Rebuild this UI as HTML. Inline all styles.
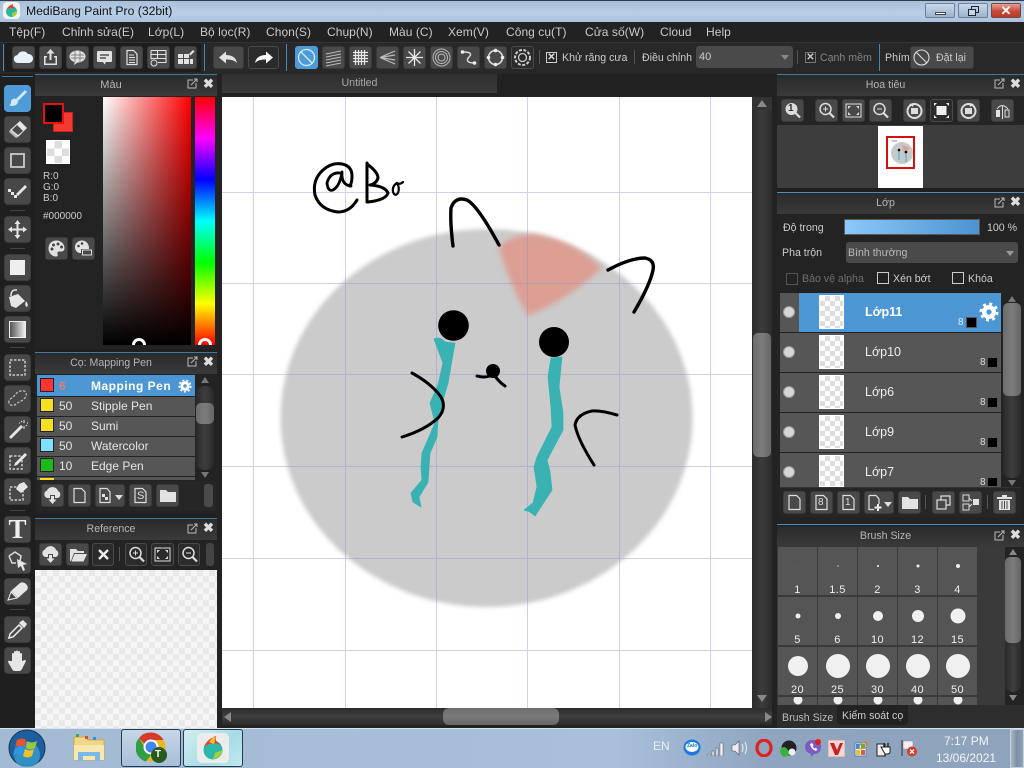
<!DOCTYPE html>
<html><head><meta charset="utf-8"><title>MediBang Paint Pro</title>
<style>
html,body{margin:0;padding:0;width:1024px;height:768px;overflow:hidden;background:#1f1f1f}
body{position:relative;font-family:"Liberation Sans","Noto Sans CJK JP",sans-serif;font-size:12px;color:#ccc}
div,span,svg{position:absolute;box-sizing:border-box}
span,.t{white-space:nowrap}
.m{top:25px;font-size:12px;letter-spacing:.05px;color:#c9c9c9}
.b{width:23px;height:23px;background:#494949;border-radius:3px;border:1px solid #3a3a3a}
.b svg{left:0;top:0;width:21px;height:21px;fill:#e2e2e2;stroke:none}
.d{background:#2b2b2b;border-color:#4a4a4a}
.l{width:27px;height:27px;background:#484848;border-radius:4px;border:1px solid #3b3b3b}
.l svg{left:0;top:0;width:25px;height:25px;fill:#e6e6e6}
.tb{height:21px;background:linear-gradient(#2a2a2a,#3a3a3a);text-align:center;line-height:21px;color:#b5b5b5;font-size:10.6px}
.ck{background:repeating-conic-gradient(#e9e9e9 0 25%,#f5f5f5 0 50%) 0 0/12px 12px}
.x{color:#ddd;font-size:13px;font-weight:bold;line-height:14px}
.sw{left:40px;width:14px;height:14px;border:1px solid #222}
.row{left:37px;width:158px;height:19px;background:#565656}
.n{left:59px;color:#e4e4e4}.na{left:91px;color:#e4e4e4}
.lr{left:780px;width:221px;height:39px;background:#565656}
.eye{left:784px;width:10px;height:10px;border-radius:50%;background:#d6d6d6;box-shadow:0 0 0 1px #999}
.th{left:819px;width:25px;height:34px;border:1px solid #fff;background:repeating-conic-gradient(#ddd 0 25%,#fff 0 50%) 0 0/10px 10px}
.ln{left:865px;color:#eee;font-size:12.5px}
.ls{width:11px;height:11px;background:#000;border:1px solid #555}
.e{color:#ddd;font-size:10px}
.c{width:39px;height:48px;background:#555}
.c i{position:absolute;border-radius:50%;background:#f0f0f0;left:50%;top:19px;transform:translate(-50%,-50%)}
.c b{position:absolute;left:0;right:0;top:37px;text-align:center;color:#eee;font-weight:normal;font-size:11px;letter-spacing:.4px}
.sb{background:linear-gradient(90deg,#2a2a2a,#3d3d3d,#2a2a2a);border-radius:8px}
.th2{background:linear-gradient(90deg,#6c6c6c,#7c7c7c,#666);border-radius:5px}
.ch{width:12px;height:12px;border:1px solid #ccc}
.s{font-size:10.6px;color:#ccc}
</style></head><body>

<!-- title bar -->
<div style="left:0;top:0;width:1024px;height:22px;background:linear-gradient(#a9c0da,#b6cee6 60%,#aac3dd);border-top:1px solid #333c48"></div>
<svg style="left:3px;top:2px;width:17px;height:17px" viewBox="0 0 17 17"><rect width="17" height="17" rx="4" fill="#f2f2f2"/><circle cx="8.500" cy="9.500" r="5.500" fill="#2bb5a0"/><path d="M4 7Q6 3 10 2Q9 5 13 7Q8 5 4 7Z" fill="#e8402c"/><path d="M9 15Q14 14 14 9L9 11Z" fill="#a3cf3c"/></svg>
<span style="left:26px;top:4px;font-size:12.200px;color:#111">MediBang Paint Pro (32bit)</span>
<div style="left:925px;top:3px;width:30px;height:15px;border:1px solid #6d829a;border-radius:2px;background:linear-gradient(#c8d8ea,#9db4cc)"><div style="left:9px;top:8px;width:11px;height:3px;background:#fff;border:1px solid #445"></div></div>
<div style="left:958px;top:3px;width:30px;height:15px;border:1px solid #6d829a;border-radius:2px;background:linear-gradient(#c8d8ea,#9db4cc)"><div style="left:12px;top:2px;width:8px;height:7px;border:1px solid #223"></div><div style="left:9px;top:5px;width:8px;height:7px;border:1px solid #223;background:#c4d4e6"></div></div>
<div style="left:991px;top:3px;width:30px;height:15px;border:1px solid #7c4640;border-radius:2px;background:linear-gradient(#e4a094,#c84a3a 55%,#b83a2c);color:#fff;text-align:center;font-weight:bold;font-size:13px;line-height:13px">✕</div>

<!-- menu -->
<div style="left:0;top:22px;width:1024px;height:20px;background:#222"></div>
<span class="m" style="left:9px">Tệp(F)</span>
<span class="m" style="left:62px">Chỉnh sửa(E)</span>
<span class="m" style="left:148px">Lớp(L)</span>
<span class="m" style="left:200px">Bộ lọc(R)</span>
<span class="m" style="left:266px">Chọn(S)</span>
<span class="m" style="left:327px">Chụp(N)</span>
<span class="m" style="left:389px">Màu (C)</span>
<span class="m" style="left:448px">Xem(V)</span>
<span class="m" style="left:506px">Công cụ(T)</span>
<span class="m" style="left:585px">Cửa số(W)</span>
<span class="m" style="left:660px">Cloud</span>
<span class="m" style="left:706px">Help</span>

<!-- toolbar -->
<div style="left:0;top:42px;width:1024px;height:32px;background:#282828;border-top:1px solid #333"></div>
<div style="left:3px;top:44px;width:1px;height:27px;background:#4b86ad"></div>
<div style="left:5px;top:43px;width:196px;height:29px;background:#1d1d1d"></div>
<div style="left:204px;top:44px;width:1px;height:27px;background:#4b86ad"></div>
<div style="left:286px;top:44px;width:1px;height:27px;background:#4b86ad"></div>
<div style="left:879px;top:44px;width:1px;height:27px;background:#4b86ad"></div>

<div class="b" style="left:12px;top:46px"><svg viewBox="0 0 21 21"><path d="M5 16a4 4 0 0 1-.5-8A6 6 0 0 1 15 7a4.500 4.500 0 0 1 1 9Z" fill="#e8f2fb"/></svg></div>
<div class="b" style="left:39px;top:46px"><svg viewBox="0 0 21 21"><path d="M10.500 2l4 4.500h-3V13h-2V6.500h-3ZM4 9h3v1.500H5.500v6h10v-6H14V9h3v9H4Z"/></svg></div>
<div class="b" style="left:66px;top:46px"><svg viewBox="0 0 21 21"><ellipse cx="10.500" cy="9.500" rx="8" ry="6"/><path d="M8 14l-1 4 5-3.500Z"/><path d="M4 8h13M4 11h13M8 4v11M13 4v11" stroke="#666" stroke-width=".7"/></svg></div>
<div class="b" style="left:93px;top:46px"><svg viewBox="0 0 21 21"><path d="M4 4h13a1 1 0 0 1 1 1v9a1 1 0 0 1-1 1h-5l-1.500 2.500L9 15H4a1 1 0 0 1-1-1V5a1 1 0 0 1 1-1Z"/><path d="M6 8h9M6 11h6" stroke="#555" stroke-width="1.500"/></svg></div>
<div class="b" style="left:120px;top:46px"><svg viewBox="0 0 21 21"><path d="M6 3.500h6.500L16 7v10.500H6Z" fill="none" stroke="#e2e2e2" stroke-width="1.200"/><path d="M8 8h5M8 10.500h6M8 13h6M8 15.500h6" stroke="#e2e2e2"/></svg></div>
<div class="b" style="left:147px;top:46px"><svg viewBox="0 0 21 21"><path d="M3 3.500h15v12H10M3 3.500v9M3 7.500h15M3 11.500h15M9.500 3.500v8" fill="none" stroke="#e2e2e2" stroke-width="1.100"/><circle cx="6" cy="16" r="3" fill="none" stroke="#e2e2e2"/></svg></div>
<div class="b" style="left:174px;top:46px"><svg viewBox="0 0 21 21"><path d="M3 7h5v4H3ZM9 7h5v4H9ZM3 12h5v5H3ZM9 12h5v5H9ZM15 12h3v5h-3Z"/><path d="M14 7l4-4 1.500 1.500-4 4Z"/></svg></div>

<div class="b" style="left:213px;top:46px;width:31px"><svg viewBox="0 0 29 21" style="width:29px"><path d="M5 10.500l7-6v3.500c6 0 10 2.500 11 8-3-3-6-3.500-11-3.500v4Z"/></svg></div>
<div class="b d" style="left:248px;top:46px;width:31px"><svg viewBox="0 0 29 21" style="width:29px"><path d="M24 10.500l-7-6v3.500c-6 0-10 2.500-11 8 3-3 6-3.500 11-3.500v4Z" fill="#fff"/></svg></div>

<div class="b" style="left:295px;top:46px;background:#4c9ad6;border-color:#4c9ad6"><svg viewBox="0 0 21 21"><circle cx="10.500" cy="10.500" r="8" fill="none" stroke="#d8ecfa" stroke-width="1.300"/><path d="M5 5l11 11" stroke="#d8ecfa" stroke-width="1.300"/></svg></div>
<div class="b" style="left:322px;top:46px"><svg viewBox="0 0 21 21"><path d="M3 7l15-3M3 10l15-3M3 13l15-3M3 16l15-3M3 19l15-3" stroke="#bbb" stroke-width="1.100"/></svg></div>
<div class="b" style="left:349px;top:46px"><svg viewBox="0 0 21 21"><path d="M3 5.500h15M3 8.500h15M3 11.500h15M3 14.500h15M5.500 3v15M8.500 3v15M11.500 3v15M14.500 3v15" stroke="#e8e8e8" stroke-width="1.200"/></svg></div>
<div class="b" style="left:376px;top:46px"><svg viewBox="0 0 21 21"><path d="M3 10.500L18 4M3 10.500L18 8M3 10.500L18 13M3 10.500L18 17" stroke="#bbb" stroke-width="1.200"/></svg></div>
<div class="b" style="left:403px;top:46px"><svg viewBox="0 0 21 21"><path d="M10.500 2v17M2 10.500h17M4.500 4.500l12 12M16.500 4.500l-12 12" stroke="#e8e8e8" stroke-width="1.300"/></svg></div>
<div class="b" style="left:430px;top:46px"><svg viewBox="0 0 21 21" style="fill:none"><circle cx="10.500" cy="10.500" r="8.500" stroke="#bbb"/><circle cx="10.500" cy="10.500" r="6" stroke="#bbb"/><circle cx="10.500" cy="10.500" r="3.500" stroke="#bbb"/></svg></div>
<div class="b" style="left:457px;top:46px"><svg viewBox="0 0 21 21" style="fill:none"><path d="M5 5c8 0 9 2 6 5s-2 6 5 6" stroke="#ddd" stroke-width="1.400"/><circle cx="4.500" cy="5" r="1.800" fill="#eee"/><circle cx="16.500" cy="16" r="1.800" fill="#eee"/></svg></div>
<div class="b" style="left:484px;top:46px"><svg viewBox="0 0 21 21" style="fill:none"><circle cx="10.500" cy="10.500" r="7" stroke="#ddd" stroke-width="1.600"/><circle cx="10.500" cy="3.500" r="1.800" fill="#eee"/><circle cx="10.500" cy="17.500" r="1.800" fill="#eee"/><circle cx="3.500" cy="10.500" r="1.800" fill="#eee"/><circle cx="17.500" cy="10.500" r="1.800" fill="#eee"/></svg></div>
<div class="b d" style="left:511px;top:46px"><svg viewBox="0 0 21 21" style="fill:none"><circle cx="10.500" cy="10.500" r="7.500" stroke="#ccc" stroke-width="2" stroke-dasharray="3 1.500"/><circle cx="10.500" cy="10.500" r="4" stroke="#ccc" stroke-width="1.300"/></svg></div>

<div style="left:539px;top:50px;width:1px;height:14px;background:#555"></div>
<div style="left:546px;top:52px;width:11px;height:11px;border:1px solid #ccc;color:#ddd;font-size:10px;line-height:9px;text-align:center;font-weight:bold">✕</div>
<span class="s" style="left:562px;top:52px">Khử răng cưa</span>
<div style="left:634px;top:50px;width:1px;height:14px;background:#555"></div>
<span class="s" style="left:642px;top:52px">Điều chỉnh</span>
<div style="left:696px;top:46px;width:97px;height:22px;background:#4a4a4a;border-radius:3px"></div>
<span style="left:699px;top:51px;color:#ccc;font-size:11px">40</span>
<div style="left:781px;top:55px;border-left:4px solid transparent;border-right:4px solid transparent;border-top:5px solid #888"></div>
<div style="left:797px;top:50px;width:1px;height:14px;background:#555"></div>
<div style="left:805px;top:52px;width:11px;height:11px;border:1px solid #777;color:#ccc;font-size:10px;line-height:9px;text-align:center;font-weight:bold">✕</div>
<span class="s" style="left:820px;top:52px;color:#848484">Cạnh mềm</span>
<span class="s" style="left:885px;top:52px">Phím</span>
<div class="b" style="left:910px;top:46px;width:64px"><svg viewBox="0 0 21 21"><circle cx="10.500" cy="10.500" r="7.500" fill="none" stroke="#ddd" stroke-width="1.100"/><path d="M5.500 5.500l10 10" stroke="#ddd" stroke-width="1.100"/></svg><span class="s" style="left:25px;top:5px">Đặt lại</span></div>

<!-- left tool strip -->
<div style="left:0;top:74px;width:35px;height:654px;background:#1f1f1f"></div>
<div style="left:2px;top:76px;width:31px;height:1px;background:#3f7aa3"></div>
<div class="l" style="left:4px;top:85px;background:#4f9bd6;border-color:#4f9bd6"><svg viewBox="0 0 25 25"><path d="M21 4l-9 9 2 2 9-9Z" fill="#d4e8f8" transform="translate(-1 0)"/><path d="M11 13c-2-1-5 0-5 3 0 2-1 3-2 3 3 2 9 1 9-4Z" fill="#d4e8f8"/></svg></div>
<div class="l" style="left:4px;top:116px"><svg viewBox="0 0 25 25"><path d="M15 4l7 7-9 9-8-7Z"/><path d="M12 8l6 6-5 4-6-5Z" fill="#4a4a4a"/><path d="M5 13l8 7-2 1-7-6Z" fill="#bbb"/></svg></div>
<div class="l" style="left:4px;top:147px"><svg viewBox="0 0 25 25"><rect x="6" y="6" width="13" height="13" fill="none" stroke="#ccc" stroke-width="1.800"/></svg></div>
<div class="l" style="left:4px;top:178px"><svg viewBox="0 0 25 25"><path d="M11 15L20 6l2 2-9 9Z"/><rect x="3" y="10" width="3" height="3"/><rect x="6" y="13" width="3" height="3"/><rect x="9" y="16" width="3" height="3"/></svg></div>
<div style="left:10px;top:210px;width:15px;height:1px;background:#444"></div>
<div class="l" style="left:4px;top:216px"><svg viewBox="0 0 25 25"><path d="M12.500 3l3 4h-2v4.500H18v-2l4 3-4 3v-2h-4.500V18h2l-3 4-3-4h2v-4.500H7v2l-4-3 4-3v2h4.500V7h-2Z"/></svg></div>
<div style="left:10px;top:248px;width:15px;height:1px;background:#444"></div>
<div class="l" style="left:4px;top:254px"><svg viewBox="0 0 25 25"><rect x="5" y="5" width="15" height="15" fill="#eee"/></svg></div>
<div class="l" style="left:4px;top:285px"><svg viewBox="0 0 25 25"><path d="M4 11l9-3 7 7-9 7-5-2Z"/><path d="M6 10q0-7 6-6" fill="none" stroke="#e6e6e6" stroke-width="1.500"/><path d="M21 15q3 4 1 6q-3-1-1-6Z"/></svg></div>
<div class="l" style="left:4px;top:316px"><div style="left:4px;top:4px;width:17px;height:17px;border:1px solid #eee;background:linear-gradient(90deg,#555,#eee)"></div></div>
<div style="left:10px;top:347px;width:15px;height:1px;background:#444"></div>
<div class="l" style="left:4px;top:354px"><svg viewBox="0 0 25 25"><rect x="5" y="5" width="15" height="15" fill="none" stroke="#ccc" stroke-width="1.500" stroke-dasharray="2.500 1.500"/></svg></div>
<div class="l" style="left:4px;top:385px"><svg viewBox="0 0 25 25"><path d="M4 17c-1-4 4-5 6-8s6-5 9-4 3 5 0 8-6 3-8 5-6 2-7-1Z" fill="none" stroke="#bbb" stroke-width="1.300" stroke-dasharray="2.500 1.500"/></svg></div>
<div class="l" style="left:4px;top:416px"><svg viewBox="0 0 25 25"><path d="M4 20L16 8l2 2L6 22Z"/><path d="M19 3v3M19 9v3M15 6h-1M22 6h1M16 4l1 1M21 8l1 1" stroke="#eee"/></svg></div>
<div class="l" style="left:4px;top:447px"><svg viewBox="0 0 25 25"><rect x="5" y="8" width="12" height="13" fill="none" stroke="#ccc" stroke-width="1.500" stroke-dasharray="2.500 1.500"/><path d="M10 15l10-10 2 2-10 10-3 1Z"/></svg></div>
<div class="l" style="left:4px;top:478px"><svg viewBox="0 0 25 25"><rect x="5" y="8" width="13" height="13" fill="none" stroke="#ccc" stroke-width="1.500" stroke-dasharray="2.500 1.500"/><path d="M14 5l5-2 4 5-7 6-5-4Z"/></svg></div>
<div style="left:10px;top:510px;width:15px;height:1px;background:#444"></div>
<div class="l" style="left:4px;top:516px"><span style="left:0;top:-3px;width:25px;text-align:center;font:bold 27px 'Liberation Serif',serif;color:#eee">T</span></div>
<div class="l" style="left:4px;top:547px"><svg viewBox="0 0 25 25"><path d="M4 8l6-4 6 4 -1 5" fill="none" stroke="#ddd" stroke-width="1.500"/><path d="M4 8l3 7h4" fill="none" stroke="#ddd" stroke-width="1.500"/><path d="M12 11l10 5-4 1 2 5-2 1-2-5-3 2Z"/></svg></div>
<div class="l" style="left:4px;top:578px"><svg viewBox="0 0 25 25"><path d="M15 4q3-2 6 1t1 6L13 19 6 12Z"/><path d="M6 13l6 6-9 2Z" fill="none" stroke="#eee"/></svg></div>
<div style="left:10px;top:609px;width:15px;height:1px;background:#444"></div>
<div class="l" style="left:4px;top:616px"><svg viewBox="0 0 25 25"><path d="M15 5l3-2 4 4-2 3 -1 1-5-5Z"/><path d="M14 8l3 3-9 9-4 1 1-4Z" fill="none" stroke="#eee" stroke-width="1.500"/></svg></div>
<div class="l" style="left:4px;top:647px"><svg viewBox="0 0 25 25"><path d="M7 13V6a1 1 0 0 1 2 0V4a1 1 0 0 1 2 0v-.500a1 1 0 0 1 2 0V4a1 1 0 0 1 2 0v2a1 1 0 0 1 2 0v7l3-1c1 0 1 1 .500 2L17 21q-1 2-3 2h-4q-2 0-3-2l-4-7c0-1 1-2 2-1Z"/></svg></div>

<!-- colour panel -->
<div style="left:35px;top:74px;width:182px;height:1px;background:#3f7aa3"></div>
<div class="tb" style="left:35px;top:75px;width:182px;padding-right:30px;font-size:11px">Màu</div>
<svg style="left:187px;top:78px;width:11px;height:11px" viewBox="0 0 11 11"><path d="M6 2H1v8h8V5" fill="none" stroke="#bbb"/><path d="M4 7l6-6M7 1h3v3" fill="none" stroke="#bbb"/></svg>
<span class="x" style="left:203px;top:77px">✖</span>
<div style="left:35px;top:96px;width:182px;height:253px;background:#232323"></div>
<div style="left:53px;top:112px;width:20px;height:20px;background:#f23a30;border:1px solid #c22"></div>
<div style="left:43px;top:103px;width:21px;height:21px;background:#000;border:2px solid #e81010"></div>
<div style="left:46px;top:140px;width:24px;height:24px;background:repeating-conic-gradient(#ddd 0 25%,#fff 0 50%) 0 0/15px 15px;border:1px solid #fff"></div>
<span style="left:43px;top:171px;font-size:10px;color:#ccc">R:0</span>
<span style="left:43px;top:182px;font-size:10px;color:#ccc">G:0</span>
<span style="left:43px;top:193px;font-size:10px;color:#ccc">B:0</span>
<span style="left:43px;top:211px;font-size:10px;color:#ccc">#000000</span>
<div class="b" style="left:45px;top:237px"><svg viewBox="0 0 21 21"><path d="M10.500 2.500c-5 0-8 3.500-8 8s3.500 8 7.500 8c2 0 2-1.500 1.500-2.500s0-2.500 2-2.500h2c2 0 3-1.500 3-3.500 0-4-3.500-7.500-8-7.500Z"/><circle cx="6" cy="11" r="1.500" fill="#444"/><circle cx="7.500" cy="7" r="1.500" fill="#444"/><circle cx="12" cy="6" r="1.500" fill="#444"/><circle cx="15.500" cy="9" r="1.500" fill="#444"/></svg></div>
<div class="b" style="left:72px;top:237px"><svg viewBox="0 0 21 21"><path d="M9 2.500c-4 0-7 3-7 6.500s2.500 6 5 6h1v-4h8c.500-5-3-8.500-7-8.500Z"/><rect x="9.500" y="12" width="9" height="5" fill="none" stroke="#ddd"/><circle cx="5.500" cy="8" r="1.300" fill="#444"/><circle cx="9" cy="5.500" r="1.300" fill="#444"/></svg></div>
<div style="left:103px;top:97px;width:88px;height:248px;background:linear-gradient(to top,#000,transparent),linear-gradient(to right,#fff,#f00)"></div>
<div style="left:195px;top:97px;width:20px;height:248px;background:linear-gradient(to bottom,#f00,#f0f,#00f,#0ff,#0f0,#ff0,#f00)"></div>
<svg style="left:103px;top:330px;width:112px;height:15px" viewBox="0 0 112 15"><circle cx="36" cy="15" r="5.500" fill="none" stroke="#fff" stroke-width="3"/><circle cx="102" cy="15" r="5.500" fill="none" stroke="#fff" stroke-width="3"/></svg>

<!-- brush panel -->
<div style="left:35px;top:352px;width:182px;height:1px;background:#3f7aa3"></div>
<div class="tb" style="left:35px;top:353px;width:182px;padding-right:30px">Cọ: Mapping Pen</div>
<svg style="left:187px;top:356px;width:11px;height:11px" viewBox="0 0 11 11"><path d="M6 2H1v8h8V5" fill="none" stroke="#bbb"/><path d="M4 7l6-6M7 1h3v3" fill="none" stroke="#bbb"/></svg>
<span class="x" style="left:203px;top:355px">✖</span>
<div style="left:35px;top:374px;width:182px;height:140px;background:#232323"></div>
<div class="row" style="top:375px;height:21px;background:#4c97d3"></div>
<div class="sw" style="top:378px;background:#f33"></div>
<span class="n" style="top:379px;color:#e57a7a;font-weight:bold">6</span>
<span class="na" style="top:379px;font-weight:bold;color:#fff;letter-spacing:.5px">Mapping Pen</span>
<svg style="left:178px;top:379px;width:14px;height:14px" viewBox="0 0 14 14"><circle cx="7" cy="7" r="3.200" fill="none" stroke="#fff" stroke-width="3"/><circle cx="7" cy="7" r="5.700" fill="none" stroke="#fff" stroke-width="1.800" stroke-dasharray="2 2"/></svg>
<div class="row" style="top:397px"></div><div class="sw" style="top:398px;background:#f5e020"></div><span class="n" style="top:399px">50</span><span class="na" style="top:399px">Stipple Pen</span>
<div class="row" style="top:417px"></div><div class="sw" style="top:418px;background:#f5e020"></div><span class="n" style="top:419px">50</span><span class="na" style="top:419px">Sumi</span>
<div class="row" style="top:437px"></div><div class="sw" style="top:438px;background:#7fe0ff"></div><span class="n" style="top:439px">50</span><span class="na" style="top:439px">Watercolor</span>
<div class="row" style="top:457px"></div><div class="sw" style="top:458px;background:#1cb81c"></div><span class="n" style="top:459px">10</span><span class="na" style="top:459px">Edge Pen</span>
<div class="row" style="top:477px;height:3px"></div><div class="sw" style="top:478px;height:2px;background:#f5e020;border:0"></div>
<div style="left:201px;top:377px;border-left:4px solid transparent;border-right:4px solid transparent;border-bottom:6px solid #777"></div>
<div class="sb" style="left:196px;top:386px;width:18px;height:84px"></div>
<div class="th2" style="left:196px;top:403px;width:18px;height:21px"></div>
<div style="left:201px;top:472px;border-left:4px solid transparent;border-right:4px solid transparent;border-top:6px solid #777"></div>
<div style="left:37px;top:481px;width:178px;height:30px;background:#262626"></div>
<div class="b" style="left:41px;top:484px"><svg viewBox="0 0 21 21"><path d="M5 13a4 4 0 0 1 0-7.500A6 6 0 0 1 16 6a3.800 3.800 0 0 1 0 7h-3v-3H8v3Z"/><path d="M10.500 19l-4-4.500H9V11h3v3.500h2.500Z"/></svg></div>
<div class="b" style="left:68px;top:484px"><svg viewBox="0 0 21 21"><path d="M5 3.500h7.500L16 7v10.500H5Z" fill="none" stroke="#ddd" stroke-width="1.200"/></svg></div>
<div class="b" style="left:95px;top:484px;width:30px"><svg viewBox="0 0 21 21"><path d="M4 3.500h7L14 7v10.500H4Z" fill="none" stroke="#ddd" stroke-width="1.200"/><rect x="6" y="9" width="3" height="3"/><rect x="9" y="12" width="3" height="3"/></svg><div style="left:19px;top:10px;border-left:4px solid transparent;border-right:4px solid transparent;border-top:5px solid #ddd"></div></div>
<div class="b" style="left:129px;top:484px"><svg viewBox="0 0 21 21"><path d="M5 3.500h7.500L16 7v10.500H5Z" fill="none" stroke="#ddd" stroke-width="1.200"/></svg><span style="left:7px;top:5px;font-size:11px;color:#ddd">S</span></div>
<div class="b" style="left:156px;top:484px"><svg viewBox="0 0 21 21"><path d="M3 5h6l2 2h8v10H3Z"/></svg></div>
<div style="left:204px;top:484px;width:9px;height:23px;background:#4a4a4a;border-radius:3px"></div>

<!-- reference panel -->
<div style="left:35px;top:518px;width:182px;height:1px;background:#3f7aa3"></div>
<div class="tb" style="left:35px;top:519px;width:182px;padding-right:30px">Reference</div>
<svg style="left:187px;top:523px;width:11px;height:11px" viewBox="0 0 11 11"><path d="M6 2H1v8h8V5" fill="none" stroke="#bbb"/><path d="M4 7l6-6M7 1h3v3" fill="none" stroke="#bbb"/></svg>
<span class="x" style="left:203px;top:521px">✖</span>
<div style="left:35px;top:540px;width:182px;height:30px;background:#232323"></div>
<div class="b" style="left:39px;top:543px"><svg viewBox="0 0 21 21"><path d="M5 13a4 4 0 0 1 0-7.500A6 6 0 0 1 16 6a3.800 3.800 0 0 1 0 7h-3v-3H8v3Z"/><path d="M10.500 19l-4-4.500H9V11h3v3.500h2.500Z"/></svg></div>
<div class="b" style="left:66px;top:543px"><svg viewBox="0 0 21 21"><path d="M3 5h6l2 2h6v2H7l-3 8H3Z"/><path d="M7.500 10H20l-3.500 7.500H4.500Z"/></svg></div>
<div class="b d" style="left:92px;top:543px;width:22px"><svg viewBox="0 0 21 21"><path d="M6 6l9 9M15 6l-9 9" stroke="#eee" stroke-width="2.400"/></svg></div>
<div style="left:119px;top:547px;width:1px;height:14px;background:#555"></div>
<div class="b d" style="left:125px;top:543px;width:22px"><svg viewBox="0 0 21 21"><circle cx="9.500" cy="9" r="5.500" fill="none" stroke="#ddd" stroke-width="1.500"/><path d="M13.500 13l4.500 4.500" stroke="#ddd" stroke-width="2.200"/><path d="M7 9h5M9.500 6.500v5" stroke="#ddd"/></svg></div>
<div class="b d" style="left:151px;top:543px;width:23px"><svg viewBox="0 0 21 21"><rect x="3" y="4" width="15" height="13" fill="none" stroke="#ddd"/><path d="M5 6l3 0-3 3ZM16 6h-3l3 3ZM5 15h3l-3-3ZM16 15h-3l3-3Z" fill="#ddd"/></svg></div>
<div class="b d" style="left:178px;top:543px;width:22px"><svg viewBox="0 0 21 21"><circle cx="9.500" cy="9" r="5.500" fill="none" stroke="#ddd" stroke-width="1.500"/><path d="M13.500 13l4.500 4.500" stroke="#ddd" stroke-width="2.200"/><path d="M7 9h5" stroke="#ddd"/></svg></div>
<div style="left:206px;top:543px;width:8px;height:23px;background:#444;border-radius:3px"></div>
<div class="ck" style="left:35px;top:570px;width:182px;height:158px"></div>

<!-- canvas area -->
<div style="left:217px;top:74px;width:560px;height:654px;background:#222"></div>
<div class="tb" style="left:222px;top:74px;width:275px;height:19px;line-height:19px;background:linear-gradient(#2f2f2f,#3a3a3a);color:#a8a8a8">Untitled</div>
<div style="left:222px;top:97px;width:530px;height:611px;background:#fff;overflow:hidden">
<svg style="left:0;top:0;width:530px;height:611px" viewBox="222 97 530 611">
<defs><filter id="f1" x="-5%" y="-5%" width="110%" height="110%"><feGaussianBlur stdDeviation="2"/></filter><filter id="f2" x="-20%" y="-20%" width="140%" height="140%"><feGaussianBlur stdDeviation="3"/></filter></defs>
<ellipse cx="486.500" cy="418" rx="206" ry="189" fill="#cbcbcc" filter="url(#f1)"/>
<path d="M499 246Q515 234 535 234Q575 241 602 268Q570 298 528 316Q507 280 499 246Z" fill="#dc9f93" filter="url(#f2)"/>
<g stroke="#8f8fd0" stroke-opacity=".42" stroke-width="1" fill="none"><path d="M253.500 97V708M345.500 97V708M436.500 97V708M527.500 97V708M619.500 97V708M710.500 97V708M222 192.500H752M222 283.500H752M222 374.500H752M222 466.500H752M222 558.500H752M222 650.500H752"/></g>
<g fill="#3ab2b3" stroke="#3ab2b3" stroke-width=".8" stroke-linejoin="round">
<path d="M434 339Q440 336 445 342L455 343L452 360L448 383L443 400L438 420L437 437L430 453L429 467L428 482L419 497L421 507L413 502L411 493L422 480L421 467L422 453L435 423L430 403L438 385L443 363Z"/>
<path d="M551 358L562 357L559 387L563 413L563 430L547 460L550 472L552 490L535 516L530 512L524 510L533 503L537 487L534 467L537 457L552 427L551 407L548 377Z"/>
</g>
<circle cx="453.500" cy="325.500" r="15.300" fill="#000"/><circle cx="554" cy="342" r="15" fill="#000"/>
<circle cx="493" cy="371" r="7" fill="#000"/>
<g fill="none" stroke="#000" stroke-linecap="round" stroke-linejoin="round">
<path d="M477 376Q484 378 490 376M495 376Q499 382 505 386" stroke-width="3"/>
<path d="M453 246Q450 222 451 208Q455 196 467 200Q478 206 499 245" stroke-width="3.400"/>
<path d="M608 270Q630 258 645 258Q655 260 653 270Q650 285 634 312" stroke-width="3.400"/>
<path d="M412 373Q432 384 441 397Q447 408 438 418Q425 430 402 437" stroke-width="3"/>
<path d="M617 415Q600 410 592 411Q577 414 575 425Q578 440 594 465" stroke-width="3"/>
<path d="M357 200Q350 212 338 212Q320 210 315 195Q312 180 323 170Q332 162 342 164Q352 166 352 176Q352 182 350 186" stroke-width="3"/>
<path d="M340 173Q330 172 327 183Q328 192 333 190Q340 186 342 172Q341 185 351 186" stroke-width="2.800"/>
<path d="M367 163L367 202M367 164Q378 172 378 178Q376 184 370 185Q385 186 388 193Q386 200 368 202" stroke-width="3"/>
<path d="M397 183Q392 186 393 192Q395 197 398 193Q400 188 397 183Q400 185 403 182" stroke-width="2.200"/>
</g>
</svg>
</div>
<!-- canvas scrollbars -->
<div style="left:752px;top:97px;width:20px;height:611px;background:linear-gradient(90deg,#2b2b2b,#3c3c3c,#2b2b2b)"></div>
<div style="left:752px;top:97px;width:20px;height:13px;background:#333"></div>
<div style="left:757px;top:100px;border-left:5px solid transparent;border-right:5px solid transparent;border-bottom:7px solid #888"></div>
<div class="th2" style="left:753px;top:333px;width:18px;height:124px"></div>
<div style="left:757px;top:695px;border-left:5px solid transparent;border-right:5px solid transparent;border-top:7px solid #888"></div>
<div style="left:222px;top:708px;width:550px;height:17px;background:linear-gradient(#2c2c2c,#3f3f3f,#2c2c2c)"></div>
<div style="left:224px;top:712px;border-top:5px solid transparent;border-bottom:5px solid transparent;border-right:7px solid #888"></div>
<div style="left:765px;top:712px;border-top:5px solid transparent;border-bottom:5px solid transparent;border-left:7px solid #888"></div>
<div style="left:443px;top:708px;width:116px;height:17px;background:linear-gradient(#6e6e6e,#7a7a7a,#666);border-radius:6px"></div>

<!-- navigator panel -->
<div style="left:777px;top:74px;width:247px;height:1px;background:#3f7aa3"></div>
<div class="tb" style="left:777px;top:75px;width:247px;padding-right:30px">Hoa tiêu</div>
<svg style="left:994px;top:78px;width:11px;height:11px" viewBox="0 0 11 11"><path d="M6 2H1v8h8V5" fill="none" stroke="#bbb"/><path d="M4 7l6-6M7 1h3v3" fill="none" stroke="#bbb"/></svg>
<span class="x" style="left:1010px;top:77px">✖</span>
<div style="left:777px;top:96px;width:247px;height:29px;background:#252525"></div>
<div class="b" style="left:781px;top:99px"><svg viewBox="0 0 21 21"><circle cx="9.500" cy="9" r="6" fill="#ddd"/><path d="M13.500 13l4.500 4.500" stroke="#ddd" stroke-width="2.200"/></svg><span style="left:6px;top:3px;font-size:10px;color:#333;font-weight:bold">1</span></div>
<div class="b" style="left:815px;top:99px"><svg viewBox="0 0 21 21"><circle cx="9.500" cy="9" r="5.500" fill="none" stroke="#ddd" stroke-width="1.500"/><path d="M13.500 13l4.500 4.500" stroke="#ddd" stroke-width="2.200"/><path d="M7 9h5M9.500 6.500v5" stroke="#ddd"/></svg></div>
<div class="b" style="left:842px;top:99px"><svg viewBox="0 0 21 21"><rect x="3" y="4" width="15" height="13" fill="none" stroke="#ddd"/><path d="M5 6l3 0-3 3ZM16 6h-3l3 3ZM5 15h3l-3-3ZM16 15h-3l3-3Z" fill="#ddd"/></svg></div>
<div class="b" style="left:869px;top:99px"><svg viewBox="0 0 21 21"><circle cx="9.500" cy="9" r="5.500" fill="none" stroke="#ddd" stroke-width="1.500"/><path d="M13.500 13l4.500 4.500" stroke="#ddd" stroke-width="2.200"/><path d="M7 9h5" stroke="#ddd"/></svg></div>
<div class="b" style="left:903px;top:99px"><svg viewBox="0 0 21 21"><circle cx="10.500" cy="11" r="7" fill="none" stroke="#ddd" stroke-width="2"/><rect x="7" y="8" width="7" height="6" fill="#ddd"/><path d="M5 4l5-1-1 4Z"/></svg></div>
<div class="b d" style="left:930px;top:99px"><svg viewBox="0 0 21 21"><rect x="5.500" y="6" width="10" height="9" fill="#eee"/><path d="M3 3l3 0-3 3ZM18 3h-3l3 3ZM3 18h3l-3-3ZM18 18h-3l3-3Z" fill="#eee"/></svg></div>
<div class="b" style="left:957px;top:99px"><svg viewBox="0 0 21 21"><circle cx="10.500" cy="11" r="7" fill="none" stroke="#ddd" stroke-width="2"/><rect x="7" y="8" width="7" height="6" fill="#ddd"/><path d="M16 4l-5-1 1 4Z"/></svg></div>
<div class="b" style="left:991px;top:99px"><svg viewBox="0 0 21 21"><path d="M4 10h4v7H4Z"/><path d="M13 10h4v7h-4Z" fill="none" stroke="#ddd"/><path d="M10.500 5v14M5 9q5-7 11 0" stroke="#ddd" fill="none"/></svg></div>
<div style="left:777px;top:125px;width:247px;height:63px;background:#3d3d3d"></div>
<div style="left:878px;top:126px;width:45px;height:62px;background:#fff"></div>
<div style="left:886px;top:136px;width:29px;height:33px;border:2px solid #d80f0f"></div>
<svg style="left:888px;top:138px;width:25px;height:29px" viewBox="0 0 25 29"><circle cx="14" cy="15" r="11" fill="#c4cacc"/><path d="M14 7l8 3-6 6Z" fill="#d9a296"/><path d="M11 12v10M18 14v10" stroke="#3ab2b3"/><circle cx="11" cy="12" r="1.300"/><circle cx="18" cy="14" r="1.300"/><path d="M4 3h5" stroke="#888"/></svg>

<!-- layer panel -->
<div style="left:777px;top:192px;width:247px;height:1px;background:#4d8fbb"></div>
<div class="tb" style="left:777px;top:193px;width:247px;padding-right:30px">Lớp</div>
<svg style="left:994px;top:197px;width:11px;height:11px" viewBox="0 0 11 11"><path d="M6 2H1v8h8V5" fill="none" stroke="#bbb"/><path d="M4 7l6-6M7 1h3v3" fill="none" stroke="#bbb"/></svg>
<span class="x" style="left:1010px;top:195px">✖</span>
<div style="left:777px;top:214px;width:247px;height:310px;background:#232323"></div>
<span class="s" style="left:783px;top:222px">Độ trong</span>
<div style="left:844px;top:219px;width:136px;height:16px;background:linear-gradient(90deg,#8bc8fb,#4b94cf);border:1px solid #5a5a5a"></div>
<span class="s" style="left:987px;top:222px">100 %</span>
<span class="s" style="left:782px;top:247px">Pha trộn</span>
<div style="left:846px;top:242px;width:172px;height:21px;background:#4a4a4a;border-radius:3px"></div>
<span class="s" style="left:848px;top:247px;color:#b8b8b8">Bình thường</span>
<div style="left:1006px;top:251px;border-left:4px solid transparent;border-right:4px solid transparent;border-top:5px solid #999"></div>
<div class="ch" style="left:786px;top:273px;border-color:#555"></div>
<span class="s" style="left:802px;top:273px;color:#6e6e6e">Bảo vệ alpha</span>
<div class="ch" style="left:877px;top:272px"></div>
<span class="s" style="left:893px;top:273px">Xén bớt</span>
<div class="ch" style="left:952px;top:272px"></div>
<span class="s" style="left:968px;top:273px">Khóa</span>

<div class="lr" style="top:293px"></div><div style="left:799px;top:293px;width:202px;height:39px;background:#4c97d3"></div>
<div class="lr" style="top:333px"></div><div class="lr" style="top:373px"></div><div class="lr" style="top:413px"></div><div class="lr" style="top:453px;height:34px"></div>
<div class="eye" style="top:307px"></div><div class="eye" style="top:347px"></div><div class="eye" style="top:387px"></div><div class="eye" style="top:427px"></div><div class="eye" style="top:467px"></div>
<div class="th" style="top:295px"></div><div class="th" style="top:335px"></div><div class="th" style="top:375px"></div><div class="th" style="top:415px"></div><div class="th" style="top:455px;height:32px"></div>
<span class="ln" style="top:305px;font-weight:bold;color:#fff">Lớp11</span>
<span class="ln" style="top:345px">Lớp10</span>
<span class="ln" style="top:385px">Lớp6</span>
<span class="ln" style="top:425px">Lớp9</span>
<span class="ln" style="top:465px">Lớp7</span>
<svg style="left:979px;top:302px;width:20px;height:20px" viewBox="0 0 20 20"><circle cx="10" cy="10" r="4.800" fill="none" stroke="#fff" stroke-width="4.400"/><circle cx="10" cy="10" r="8.200" fill="none" stroke="#fff" stroke-width="2.600" stroke-dasharray="3 3.430"/></svg>
<span class="e" style="left:958px;top:317px;color:#dcecf8">8</span><div class="ls" style="left:966px;top:317px"></div>
<span class="e" style="left:980px;top:357px">8</span><div class="ls" style="left:987px;top:357px"></div>
<span class="e" style="left:980px;top:397px">8</span><div class="ls" style="left:987px;top:397px"></div>
<span class="e" style="left:980px;top:437px">8</span><div class="ls" style="left:987px;top:437px"></div>
<span class="e" style="left:980px;top:477px">8</span><div class="ls" style="left:987px;top:477px;height:10px"></div>
<div style="left:1008px;top:296px;border-left:4px solid transparent;border-right:4px solid transparent;border-bottom:6px solid #777"></div>
<div class="sb" style="left:1003px;top:303px;width:18px;height:175px"></div>
<div class="th2" style="left:1003px;top:303px;width:18px;height:93px"></div>
<div style="left:1008px;top:480px;border-left:4px solid transparent;border-right:4px solid transparent;border-top:6px solid #777"></div>
<div style="left:780px;top:487px;width:241px;height:30px;background:#262626;border-top:1px solid #333"></div>
<div class="b" style="left:783px;top:491px"><svg viewBox="0 0 21 21"><path d="M5 3.500h7.500L16 7v10.500H5Z" fill="none" stroke="#ddd" stroke-width="1.200"/></svg></div>
<div class="b" style="left:810px;top:491px"><svg viewBox="0 0 21 21"><path d="M5 3.500h7.500L16 7v10.500H5Z" fill="none" stroke="#ddd" stroke-width="1.200"/></svg><span style="left:7px;top:5px;font-size:10px;color:#ddd">8</span></div>
<div class="b" style="left:837px;top:491px"><svg viewBox="0 0 21 21"><path d="M5 3.500h7.500L16 7v10.500H5Z" fill="none" stroke="#ddd" stroke-width="1.200"/></svg><span style="left:7px;top:5px;font-size:10px;color:#ddd">1</span></div>
<div class="b" style="left:864px;top:491px;width:30px"><svg viewBox="0 0 21 21"><path d="M4 3.500h7L14 7v5M9 17.500H4v-14" fill="none" stroke="#ddd" stroke-width="1.200"/><path d="M13 12v7M9.500 15.500h7" stroke="#eee" stroke-width="2"/></svg><div style="left:19px;top:10px;border-left:4px solid transparent;border-right:4px solid transparent;border-top:5px solid #ddd"></div></div>
<div class="b" style="left:898px;top:491px"><svg viewBox="0 0 21 21"><path d="M3 5h6l2 2h8v10H3Z"/></svg></div>
<div style="left:925px;top:495px;width:1px;height:14px;background:#555"></div>
<div class="b" style="left:932px;top:491px"><svg viewBox="0 0 21 21"><rect x="4" y="8" width="9" height="9" fill="none" stroke="#ddd" stroke-width="1.200"/><path d="M8 8V4h9v9h-4" fill="none" stroke="#ddd" stroke-width="1.200"/></svg></div>
<div class="b" style="left:959px;top:491px"><svg viewBox="0 0 21 21"><path d="M3 3h6v6H3ZM3 12h6v6H3Z" fill="none" stroke="#ddd"/><rect x="13" y="7" width="6" height="6"/><path d="M9 6l3 3M9 15l3-3" stroke="#ddd"/></svg></div>
<div style="left:987px;top:495px;width:1px;height:14px;background:#555"></div>
<div class="b" style="left:993px;top:491px"><svg viewBox="0 0 21 21"><path d="M3 5h15v2H3ZM8 3h5v2H8ZM5 8h11v10H5Z"/><path d="M8 9v8M10.500 9v8M13 9v8" stroke="#494949" stroke-width="1"/></svg></div>

<!-- brush size panel -->
<div style="left:777px;top:524px;width:247px;height:1px;background:#4d8fbb"></div>
<div class="tb" style="left:777px;top:526px;width:247px;padding-right:30px">Brush Size</div>
<svg style="left:994px;top:530px;width:11px;height:11px" viewBox="0 0 11 11"><path d="M6 2H1v8h8V5" fill="none" stroke="#bbb"/><path d="M4 7l6-6M7 1h3v3" fill="none" stroke="#bbb"/></svg>
<span class="x" style="left:1010px;top:528px">✖</span>
<div style="left:777px;top:547px;width:228px;height:158px;background:#3a3a3a"></div>
<div class="c" style="left:778px;top:547px"><i style="width:1px;height:1px;background:#777"></i><b>1</b></div>
<div class="c" style="left:818px;top:547px"><i style="width:2px;height:2px;background:#999"></i><b>1.5</b></div>
<div class="c" style="left:858px;top:547px"><i style="width:2px;height:2px"></i><b>2</b></div>
<div class="c" style="left:898px;top:547px"><i style="width:3px;height:3px"></i><b>3</b></div>
<div class="c" style="left:938px;top:547px"><i style="width:4px;height:4px"></i><b>4</b></div>
<div class="c" style="left:778px;top:597px"><i style="width:5px;height:5px"></i><b>5</b></div>
<div class="c" style="left:818px;top:597px"><i style="width:6px;height:6px"></i><b>6</b></div>
<div class="c" style="left:858px;top:597px"><i style="width:10px;height:10px"></i><b>10</b></div>
<div class="c" style="left:898px;top:597px"><i style="width:12px;height:12px"></i><b>12</b></div>
<div class="c" style="left:938px;top:597px"><i style="width:15px;height:15px"></i><b>15</b></div>
<div class="c" style="left:778px;top:647px"><i style="width:20px;height:20px"></i><b>20</b></div>
<div class="c" style="left:818px;top:647px"><i style="width:24px;height:24px"></i><b>25</b></div>
<div class="c" style="left:858px;top:647px"><i style="width:24px;height:24px"></i><b>30</b></div>
<div class="c" style="left:898px;top:647px"><i style="width:24px;height:24px"></i><b>40</b></div>
<div class="c" style="left:938px;top:647px"><i style="width:24px;height:24px"></i><b>50</b></div>
<div class="c" style="left:778px;top:697px;height:8px;overflow:hidden"><i style="width:9px;height:9px;top:3px"></i></div>
<div class="c" style="left:818px;top:697px;height:8px;overflow:hidden"><i style="width:9px;height:9px;top:3px"></i></div>
<div class="c" style="left:858px;top:697px;height:8px;overflow:hidden"><i style="width:9px;height:9px;top:3px"></i></div>
<div class="c" style="left:898px;top:697px;height:8px;overflow:hidden"><i style="width:9px;height:9px;top:3px"></i></div>
<div class="c" style="left:938px;top:697px;height:8px;overflow:hidden"><i style="width:9px;height:9px;top:3px"></i></div>
<div style="left:1005px;top:547px;width:19px;height:158px;background:#232323"></div>
<div style="left:1009px;top:549px;border-left:4px solid transparent;border-right:4px solid transparent;border-bottom:6px solid #888"></div>
<div class="sb" style="left:1005px;top:557px;width:16px;height:135px"></div>
<div class="th2" style="left:1005px;top:557px;width:16px;height:86px"></div>
<div style="left:1009px;top:695px;border-left:4px solid transparent;border-right:4px solid transparent;border-top:6px solid #888"></div>
<div style="left:777px;top:705px;width:247px;height:23px;background:#2d2d2d"></div>
<span style="left:782px;top:712px;color:#bbb;font-size:10.600px">Brush Size</span>
<div style="left:837px;top:705px;width:71px;height:20px;background:#222;border-radius:0 0 4px 4px"></div>
<span class="s" style="left:842px;top:710px">Kiểm soát cọ</span>

<!-- taskbar -->
<div style="left:0;top:728px;width:1024px;height:40px;background:linear-gradient(90deg,#a3bad4,#a8c0dc 60%,#8fa5bf 75%,#8ea3bc);border-top:1px solid #d6e2ee"></div>
<svg style="left:8px;top:729px;width:38px;height:38px" viewBox="0 0 38 38"><circle cx="19" cy="19" r="18" fill="#1d5f9e" stroke="#1a3550"/><circle cx="19" cy="26" r="13" fill="#3fb0de" opacity=".6"/><path d="M9 11q5-3 9 0l-2 7q-4-3-9 0Z" fill="#e8552c"/><path d="M19 12q5 3 10 0l-2 7q-5 3-9 0Z" fill="#9cc63c"/><path d="M7 19q5-3 9 0l-2 7q-4-3-9 0Z" fill="#2f97e0"/><path d="M17 20q5 3 9 0l-2 7q-5 3-9 0Z" fill="#f4c12c"/></svg>
<svg style="left:72px;top:733px;width:34px;height:30px" viewBox="0 0 34 30"><path d="M2 4h12l2 3h16v20H2Z" fill="#f0d888" stroke="#c8a850"/><rect x="4" y="1" width="3" height="3" fill="#3ab03a"/><rect x="13" y="3" width="3" height="3" fill="#d85030"/><rect x="21" y="4" width="3" height="3" fill="#3090d8"/><path d="M2 12h30v15H2Z" fill="#f8e8b0"/><path d="M6 28v-9h22v9h-5v-5H11v5Z" fill="#7ab8e8"/></svg>
<div style="left:121px;top:729px;width:60px;height:38px;background:linear-gradient(#c6d6e8,#a8bfd8);border:1px solid #2b3a4a;border-radius:3px"></div>
<svg style="left:136px;top:732px;width:32px;height:32px" viewBox="0 0 32 32"><circle cx="15" cy="15" r="14.500" fill="#e8b820"/><path d="M15 .5A14.500 14.500 0 0 1 27.500 8H15a7 7 0 0 0-6.500 4L3 6A14.500 14.500 0 0 1 15 .5Z" fill="#d63a2c"/><path d="M3 6l6 10 6 7-5 6.500A14.500 14.500 0 0 1 3 6Z" fill="#2f9e44"/><circle cx="15" cy="15" r="6.500" fill="#4285f4" stroke="#fff" stroke-width="2"/><circle cx="23" cy="23" r="8" fill="#2a5b1e"/></svg>
<span style="left:155px;top:749px;font-size:10px;color:#fff;font-weight:bold">T</span>
<div style="left:183px;top:729px;width:60px;height:38px;background:linear-gradient(135deg,#d4edf2,#a4dde6 60%,#c4e8ee);border:1px solid #2b3a4a;border-radius:3px"></div>
<svg style="left:197px;top:733px;width:32px;height:30px" viewBox="0 0 32 30"><rect width="32" height="30" rx="5" fill="#ececec"/><circle cx="16" cy="17" r="9.500" fill="#2cb8a8"/><path d="M7 14q3-8 12-11q-2 5 5 9-10-4-17 2Z" fill="#e8402c"/><path d="M16 26q9-1 9-9l-7 3Z" fill="#a3cf3c"/><path d="M17 3q2 3 0 8l-5-2Z" fill="#f4c12c"/></svg>
<span style="left:653px;top:739px;font-size:12px;color:#f0f0f0">EN</span>
<svg style="left:683px;top:739px;width:18px;height:17px" viewBox="0 0 18 17"><ellipse cx="9" cy="8.500" rx="8.500" ry="8" fill="#1a78e0"/><ellipse cx="9" cy="8" rx="6.500" ry="5" fill="#fff"/></svg>
<span style="left:687px;top:743px;font-size:5px;color:#1a78e0;font-weight:bold">Zalo</span>
<svg style="left:707px;top:742px;width:17px;height:14px" viewBox="0 0 17 14"><path d="M1 12h2v2H1ZM5 9h2v5H5ZM9 6h2v8H9ZM13 1h3v13h-3Z" fill="#f4f4f4" stroke="#333" stroke-width=".4"/></svg>
<svg style="left:731px;top:740px;width:17px;height:16px" viewBox="0 0 17 16"><path d="M1 5h3l4-4v14l-4-4H1Z" fill="#eee" stroke="#555" stroke-width=".6"/><path d="M11 4q2 4 0 8M14 2q3 6 0 12" fill="none" stroke="#eee"/></svg>
<svg style="left:755px;top:739px;width:18px;height:18px" viewBox="0 0 18 18"><ellipse cx="9" cy="9" rx="7" ry="7.800" fill="none" stroke="#e0201c" stroke-width="3.200"/></svg>
<svg style="left:779px;top:740px;width:18px;height:18px" viewBox="0 0 18 18"><circle cx="10" cy="8" r="7.500" fill="#222"/><path d="M1 10q4-6 8 0t-4 7Q1 15 1 10Z" fill="#3ab03a"/><circle cx="13" cy="12" r="3.500" fill="#eee"/></svg>
<svg style="left:804px;top:739px;width:18px;height:18px" viewBox="0 0 18 18"><path d="M9 1c4 0 8 1 8 7 0 5-3 7-7 7l-3 3v-3c-3-1-6-3-6-7 0-5 4-7 8-7Z" fill="#7d5cc8"/><path d="M6 5q1 5 6 7l1.500-2-2-1-1 .5Q9 8 8.500 7L9.500 6 8 4Z" fill="#fff"/><circle cx="14" cy="3" r="3" fill="#e02020"/></svg>
<svg style="left:828px;top:740px;width:17px;height:17px" viewBox="0 0 17 17"><rect width="17" height="17" fill="#f2d8d0" stroke="#c8a8a0"/><path d="M2 3l4 0 3 7 3-7h3l-5 12H7Z" fill="#c82020"/></svg>
<svg style="left:852px;top:739px;width:18px;height:18px" viewBox="0 0 18 18"><rect x="3" y="4" width="11" height="13" fill="#fff" stroke="#5080c0"/><path d="M4 5h4v5H4Z" fill="#3a90d8"/><path d="M9 5h4v5H9Z" fill="#60b040"/><path d="M4 11h4v5H4Z" fill="#e8c030"/><path d="M9 11h4v5H9Z" fill="#e06030"/><ellipse cx="12" cy="6" rx="6" ry="2.500" fill="none" stroke="#d89030" transform="rotate(-35 12 6)"/></svg>
<svg style="left:876px;top:740px;width:16px;height:17px" viewBox="0 0 16 17"><rect x="1" y="4" width="8" height="12" fill="#eee" stroke="#222"/><path d="M5 7h9v5q0 2-4 2H9Z" fill="#fff" stroke="#222"/><path d="M8 3v4M12 3v4M9 14v2" stroke="#222" stroke-width="1.400"/></svg>
<svg style="left:900px;top:739px;width:18px;height:18px" viewBox="0 0 18 18"><path d="M2 1v16" stroke="#333"/><path d="M3 2h10v8H3Z" fill="#f0f0f0" stroke="#888" stroke-width=".6"/><circle cx="12" cy="12.500" r="5" fill="#d8382c"/><path d="M10 10.500l4 4M14 10.500l-4 4" stroke="#fff" stroke-width="1.300"/></svg>
<span style="left:944px;top:734px;width:44px;text-align:center;font-size:12px;color:#f4f4f4">7:17 PM</span>
<span style="left:936px;top:751px;width:60px;text-align:center;font-size:12px;color:#f4f4f4">13/06/2021</span>
<div style="left:1010px;top:729px;width:14px;height:39px;background:linear-gradient(90deg,#aab8c8,#7c8ea4,#90a2b8);border:1px solid #c4d0dc"></div>
</body></html>
